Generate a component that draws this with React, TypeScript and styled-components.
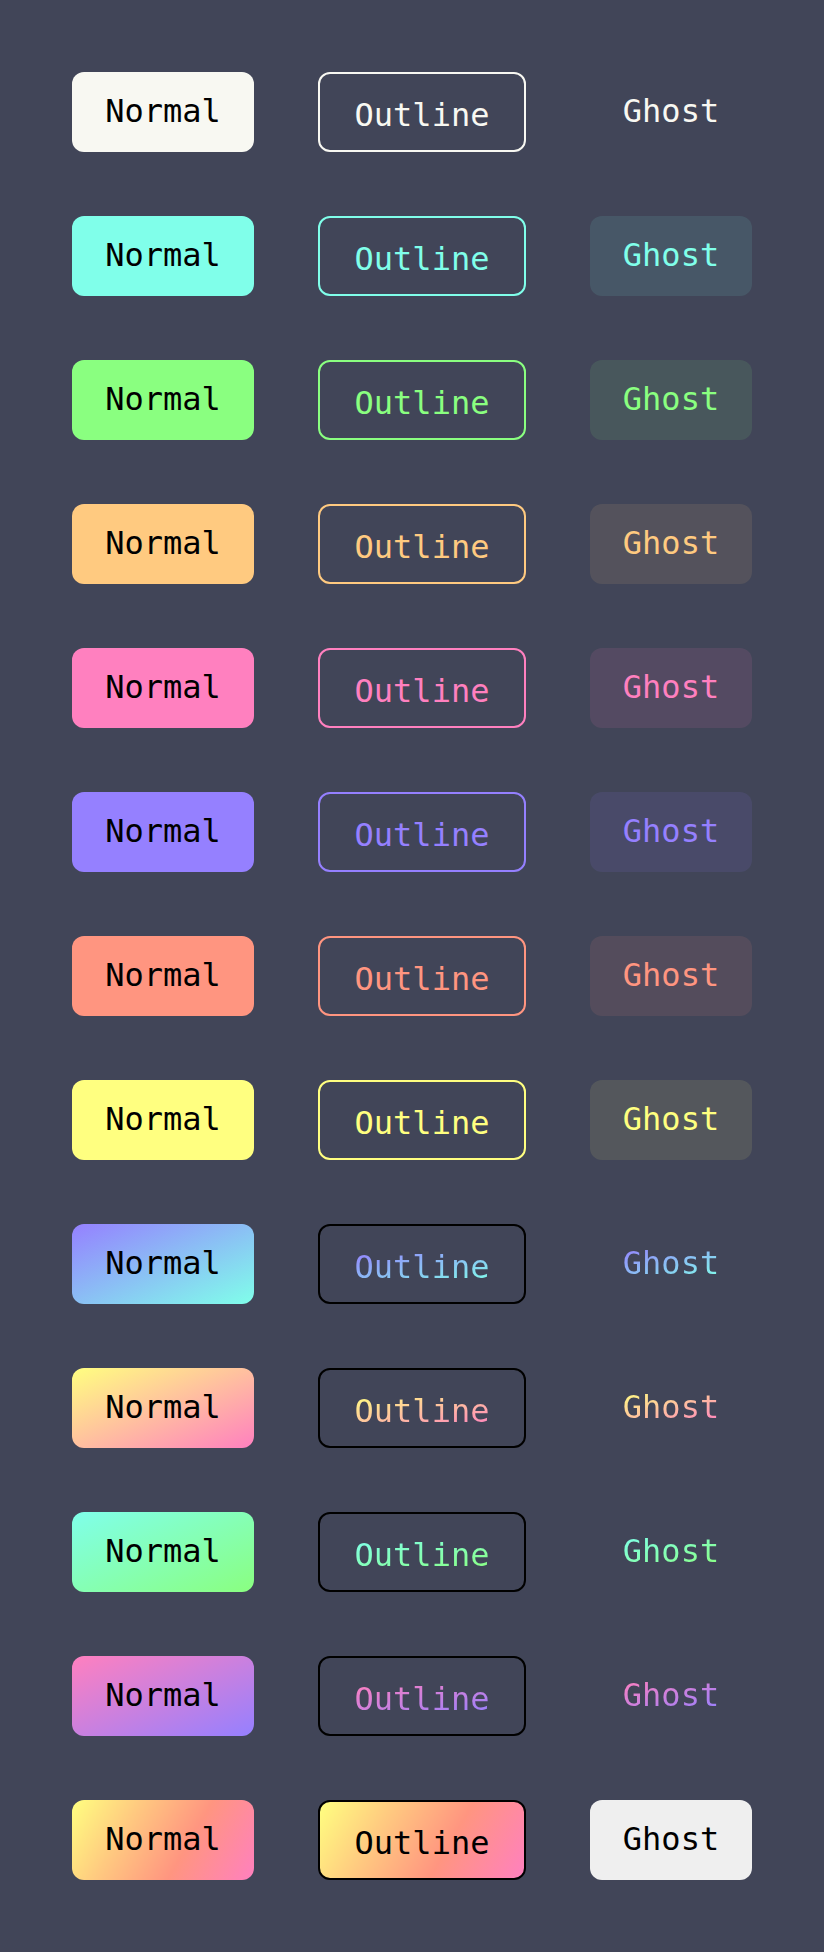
import React from "react";
import styled, { createGlobalStyle, css } from "styled-components";

const GlobalStyle = createGlobalStyle`
  html, body {
    margin: 0;
    padding: 0;
    background: #414558;
  }
  body {
    font-family: "DejaVu Sans Mono", "Liberation Mono", monospace;
  }
`;

type Solid = { kind: "solid"; color: string; ghostBg: boolean };
type Grad = { kind: "grad"; gradient: string; special?: boolean };
type Variant = Solid | Grad;

const variants: Variant[] = [
  { kind: "solid", color: "#f8f8f2", ghostBg: false },
  { kind: "solid", color: "#80ffea", ghostBg: true },
  { kind: "solid", color: "#8aff80", ghostBg: true },
  { kind: "solid", color: "#ffca80", ghostBg: true },
  { kind: "solid", color: "#ff80bf", ghostBg: true },
  { kind: "solid", color: "#9580ff", ghostBg: true },
  { kind: "solid", color: "#ff9580", ghostBg: true },
  { kind: "solid", color: "#ffff80", ghostBg: true },
  { kind: "grad", gradient: "linear-gradient(to bottom right, #9580ff 0%, #80ffea 100%)" },
  { kind: "grad", gradient: "linear-gradient(to bottom right, #ffff80 0%, #ff80bf 100%)" },
  { kind: "grad", gradient: "linear-gradient(to bottom right, #80ffea 0%, #8aff80 100%)" },
  { kind: "grad", gradient: "linear-gradient(to bottom right, #ff80bf 0%, #9580ff 100%)" },
  {
    kind: "grad",
    gradient: "linear-gradient(120deg, #ffff80 0%, #ffca80 30%, #ff9580 62%, #ff80bf 100%)",
    special: true,
  },
];

const Page = styled.main`
  min-height: 1952px;
  box-sizing: border-box;
  padding: 72px;
  display: flex;
  flex-direction: column;
  gap: 64px;
  background: #414558;
`;

const Row = styled.div`
  display: flex;
  align-items: center;
  gap: 64px;
`;

const BaseButton = styled.button`
  box-sizing: border-box;
  height: 80px;
  margin: 0;
  padding: 0 0 2px;
  border: none;
  border-radius: 12px;
  display: inline-flex;
  align-items: center;
  justify-content: center;
  font-family: "DejaVu Sans Mono", "Liberation Mono", monospace;
  font-size: 32px;
  line-height: 1;
  cursor: pointer;
`;

const NormalButton = styled(BaseButton)<{ $bg: string }>`
  width: 182px;
  background: ${(p) => p.$bg};
  color: #000;
`;

const OutlineButton = styled(BaseButton)<{ $border: string; $bg: string; $color: string }>`
  width: 208px;
  padding: 5px 0 0;
  border: 2px solid ${(p) => p.$border};
  background: ${(p) => p.$bg};
  color: ${(p) => p.$color};
`;

const GhostButton = styled(BaseButton)<{ $bg: string; $color: string }>`
  width: 162px;
  background: ${(p) => p.$bg};
  color: ${(p) => p.$color};
`;

const GradientText = styled.span<{ $gradient: string }>`
  ${(p) => css`
    background: ${p.$gradient};
    -webkit-background-clip: text;
    background-clip: text;
    color: transparent;
  `}
`;

function hexToRgba(hex: string, a: number) {
  const n = parseInt(hex.slice(1), 16);
  return `rgba(${(n >> 16) & 255}, ${(n >> 8) & 255}, ${n & 255}, ${a})`;
}

function ButtonRow({ v }: { v: Variant }) {
  if (v.kind === "solid") {
    return (
      <Row>
        <NormalButton $bg={v.color}>Normal</NormalButton>
        <OutlineButton $border={v.color} $bg="transparent" $color={v.color}>
          Outline
        </OutlineButton>
        <GhostButton $bg={v.ghostBg ? hexToRgba(v.color, 0.1) : "transparent"} $color={v.color}>
          Ghost
        </GhostButton>
      </Row>
    );
  }
  if (v.special) {
    return (
      <Row>
        <NormalButton $bg={v.gradient}>Normal</NormalButton>
        <OutlineButton $border="#000" $bg={v.gradient} $color="#000">
          Outline
        </OutlineButton>
        <GhostButton $bg="#efefef" $color="#000">
          Ghost
        </GhostButton>
      </Row>
    );
  }
  return (
    <Row>
      <NormalButton $bg={v.gradient}>Normal</NormalButton>
      <OutlineButton $border="#000" $bg="transparent" $color="#000">
        <GradientText $gradient={v.gradient}>Outline</GradientText>
      </OutlineButton>
      <GhostButton $bg="transparent" $color="#000">
        <GradientText $gradient={v.gradient}>Ghost</GradientText>
      </GhostButton>
    </Row>
  );
}

export default function App() {
  return (
    <>
      <GlobalStyle />
      <Page>
        {variants.map((v, i) => (
          <ButtonRow key={i} v={v} />
        ))}
      </Page>
    </>
  );
}
